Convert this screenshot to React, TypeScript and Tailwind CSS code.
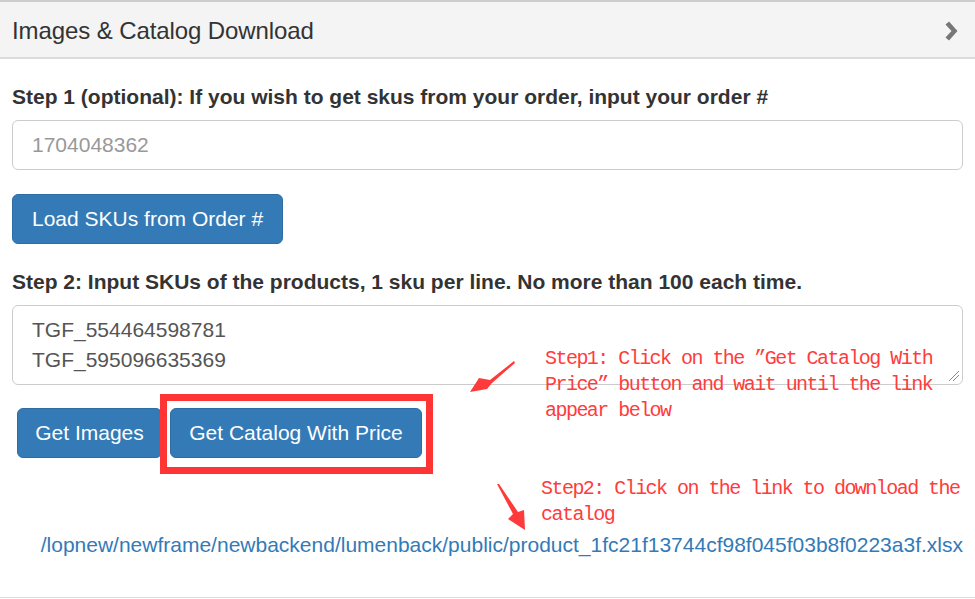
import React from "react";

const SKUS = ["TGF_554464598781", "TGF_595096635369"];
const LINK =
  "/lopnew/newframe/newbackend/lumenback/public/product_1fc21f13744cf98f045f03b8f0223a3f.xlsx";

function Chevron() {
  return (
    <svg width="13" height="20" viewBox="0 0 13 20" aria-hidden="true">
      <path d="M0.5 3.5 L4 0.5 L12.5 10 L4 19.5 L0.5 16.5 L6.5 10 Z" fill="#777" />
    </svg>
  );
}

function Arrow({ points }: { points: string }) {
  return <polygon points={points} fill="#ff3a3a" />;
}

export default function App() {
  return (
    <div className="relative w-[975px] h-[599px] overflow-hidden bg-white font-['Liberation_Sans',Arial,sans-serif] text-[#333]">
      {/* panel heading */}
      <div className="border-t-2 border-[#cdcdcd] border-b-2 border-b-[#dcdcdc] bg-[#f4f4f4] h-[59px] pl-[12px] pr-[17px] pt-[3px] flex items-center justify-between">
        <span className="text-[24px] leading-none text-[#333] tracking-[-0.1px]">
          Images &amp; Catalog Download
        </span>
        <Chevron />
      </div>

      {/* panel body */}
      <div className="px-[12px] pt-[23px]">
        <label className="block font-bold text-[21px] leading-[30px] mb-[8px]">
          Step 1 (optional): If you wish to get skus from your order, input your order #
        </label>
        <div className="h-[50px] border border-[#ccc] rounded-[6px] px-[19px] flex items-center text-[21px] text-[#999]">
          1704048362
        </div>

        <button className="mt-[24px] h-[50px] px-[19px] rounded-[6px] bg-[#337ab7] border border-[#2e6da4] text-white text-[21px]">
          Load SKUs from Order #
        </button>

        <label className="block mt-[23px] font-bold text-[21px] leading-[30px] mb-[8px]">
          Step 2: Input SKUs of the products, 1 sku per line. No more than 100 each time.
        </label>
        <div className="relative h-[80px] border border-[#ccc] rounded-[6px] px-[19px] py-[9px] text-[21px] leading-[30px] text-[#555]">
          {SKUS.map((s) => (
            <div key={s}>{s}</div>
          ))}
          <svg className="absolute right-[2px] bottom-[2px]" width="12" height="12" viewBox="0 0 12 12">
            <path d="M1 11 L11 1 M5 11 L11 5" stroke="#888" strokeWidth="1" />
          </svg>
        </div>

        <div className="mt-[23px] ml-[5px] flex gap-[8px]">
          <button className="h-[50px] w-[145px] rounded-[6px] bg-[#337ab7] border border-[#2e6da4] text-white text-[21px]">
            Get Images
          </button>
          <button className="h-[50px] w-[252px] rounded-[6px] bg-[#337ab7] border border-[#2e6da4] text-white text-[21px]">
            Get Catalog With Price
          </button>
        </div>

        <div className="mt-[72px] text-right text-[21px] leading-[30px]">
          <a className="text-[#337ab7]">{LINK}</a>
        </div>
      </div>

      <div className="absolute left-0 right-0 top-[597px] border-t border-[#ddd]" />

      {/* annotations drawn over the page */}
      <div className="absolute left-[160px] top-[394px] w-[273px] h-[80px] border-[7px] border-[#ff3535]" />

      <svg className="absolute left-0 top-0 pointer-events-none" width="975" height="599">
        <Arrow points="514,361 490,380 479,378 470,392 487,389 492,383 515,363" />
        <Arrow points="497,484 513,514 508,519 525,530 524,510 518,512 499,484" />
      </svg>

      <div className="absolute left-[545px] top-[346px] font-['Liberation_Mono','DejaVu_Sans_Mono',monospace] text-[20px] tracking-[-1.54px] leading-[26px] text-[#ff3c3c] whitespace-pre">
        <div>Step1: Click on the ”Get Catalog With</div>
        <div>Price” button and wait until the link</div>
        <div>appear below</div>
      </div>

      <div className="absolute left-[541px] top-[476px] font-['Liberation_Mono','DejaVu_Sans_Mono',monospace] text-[20px] tracking-[-1.54px] leading-[26px] text-[#ff3c3c] whitespace-pre">
        <div>Step2: Click on the link to download the</div>
        <div>catalog</div>
      </div>
    </div>
  );
}
